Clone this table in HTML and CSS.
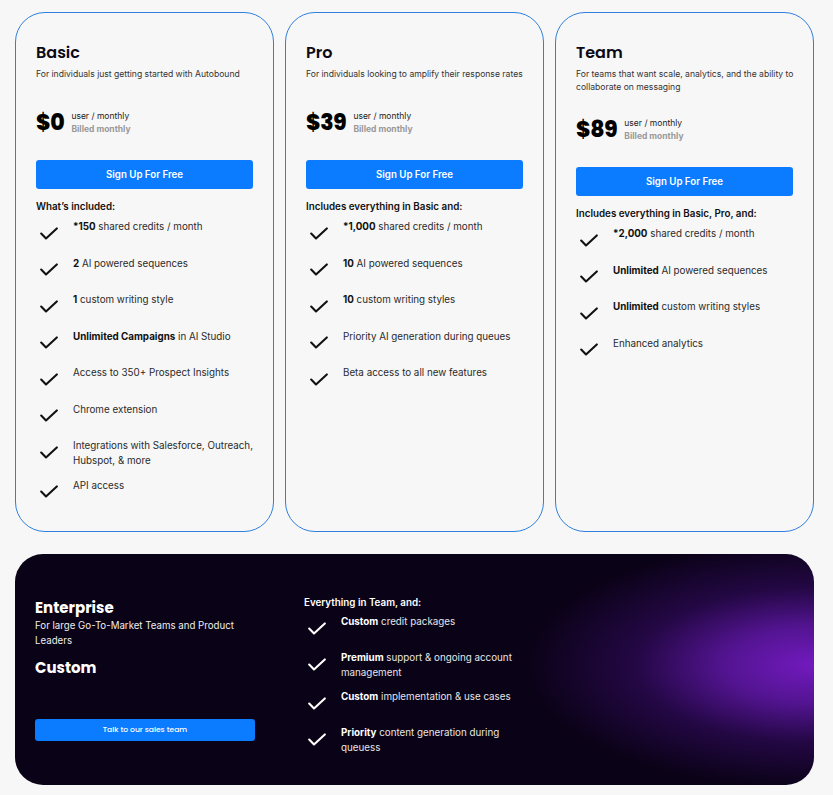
FILE: index.html
```html
<!DOCTYPE html>
<html>
<head>
<meta charset="utf-8">
<link rel="stylesheet" href="styles.css">
</head>
<body>
<svg width="0" height="0" class="defs">
  <symbol id="chk" viewBox="0 0 18 13"><path d="M1.2 6.6 L6 11.4 L16.8 1.4" fill="none" stroke="currentColor" stroke-width="2.1" stroke-linecap="round" stroke-linejoin="round"/></symbol>
</svg>
<main class="page">
  <section class="cards">
    <article class="card">
      <h2 class="title">Basic</h2>
      <p class="desc">For individuals just getting started with Autobound</p>
      <div class="price-row">
        <span class="price">$0</span>
        <span class="per"><span>user / monthly</span><span class="billed">Billed monthly</span></span>
      </div>
      <button class="btn">Sign Up For Free</button>
      <p class="list-head">What’s included:</p>
      <ul class="list">
        <li><span class="ic"><svg><use href="#chk"/></svg></span><span class="tx"><b>*150</b> shared credits / month</span></li>
        <li><span class="ic"><svg><use href="#chk"/></svg></span><span class="tx"><b>2</b> AI powered sequences</span></li>
        <li><span class="ic"><svg><use href="#chk"/></svg></span><span class="tx"><b>1</b> custom writing style</span></li>
        <li><span class="ic"><svg><use href="#chk"/></svg></span><span class="tx"><b>Unlimited Campaigns</b> in AI Studio</span></li>
        <li><span class="ic"><svg><use href="#chk"/></svg></span><span class="tx">Access to 350+ Prospect Insights</span></li>
        <li><span class="ic"><svg><use href="#chk"/></svg></span><span class="tx">Chrome extension</span></li>
        <li><span class="ic"><svg><use href="#chk"/></svg></span><span class="tx">Integrations with Salesforce, Outreach, Hubspot, &amp; more</span></li>
        <li><span class="ic"><svg><use href="#chk"/></svg></span><span class="tx">API access</span></li>
      </ul>
    </article>
    <article class="card">
      <h2 class="title">Pro</h2>
      <p class="desc">For individuals looking to amplify their response rates</p>
      <div class="price-row">
        <span class="price">$39</span>
        <span class="per"><span>user / monthly</span><span class="billed">Billed monthly</span></span>
      </div>
      <button class="btn">Sign Up For Free</button>
      <p class="list-head">Includes everything in Basic and:</p>
      <ul class="list">
        <li><span class="ic"><svg><use href="#chk"/></svg></span><span class="tx"><b>*1,000</b> shared credits / month</span></li>
        <li><span class="ic"><svg><use href="#chk"/></svg></span><span class="tx"><b>10</b> AI powered sequences</span></li>
        <li><span class="ic"><svg><use href="#chk"/></svg></span><span class="tx"><b>10</b> custom writing styles</span></li>
        <li><span class="ic"><svg><use href="#chk"/></svg></span><span class="tx">Priority AI generation during queues</span></li>
        <li><span class="ic"><svg><use href="#chk"/></svg></span><span class="tx">Beta access to all new features</span></li>
      </ul>
    </article>
    <article class="card">
      <h2 class="title">Team</h2>
      <p class="desc">For teams that want scale, analytics, and the ability to collaborate on messaging</p>
      <div class="price-row">
        <span class="price">$89</span>
        <span class="per"><span>user / monthly</span><span class="billed">Billed monthly</span></span>
      </div>
      <button class="btn">Sign Up For Free</button>
      <p class="list-head">Includes everything in Basic, Pro, and:</p>
      <ul class="list">
        <li><span class="ic"><svg><use href="#chk"/></svg></span><span class="tx"><b>*2,000</b> shared credits / month</span></li>
        <li><span class="ic"><svg><use href="#chk"/></svg></span><span class="tx"><b>Unlimited</b> AI powered sequences</span></li>
        <li><span class="ic"><svg><use href="#chk"/></svg></span><span class="tx"><b>Unlimited</b> custom writing styles</span></li>
        <li><span class="ic"><svg><use href="#chk"/></svg></span><span class="tx">Enhanced analytics</span></li>
      </ul>
    </article>
  </section>
  <section class="enterprise">
    <div class="ent-left">
      <h2 class="ent-title">Enterprise</h2>
      <p class="ent-desc">For large Go-To-Market Teams and Product Leaders</p>
      <p class="ent-price">Custom</p>
      <button class="ent-btn">Talk to our sales team</button>
    </div>
    <div class="ent-right">
      <p class="list-head">Everything in Team, and:</p>
      <ul class="list">
        <li><span class="ic"><svg><use href="#chk"/></svg></span><span class="tx"><b>Custom</b> credit packages</span></li>
        <li><span class="ic"><svg><use href="#chk"/></svg></span><span class="tx"><b>Premium</b> support &amp; ongoing account management</span></li>
        <li><span class="ic"><svg><use href="#chk"/></svg></span><span class="tx"><b>Custom</b> implementation &amp; use cases</span></li>
        <li><span class="ic"><svg><use href="#chk"/></svg></span><span class="tx"><b>Priority</b> content generation during queuess</span></li>
      </ul>
    </div>
  </section>
</main>
</body>
</html>
```
FILE: styles.css
```css
* { box-sizing: border-box; }
html, body { margin: 0; padding: 0; }
body {
  background: #f7f7f7;
  font-family: "Inter", "DejaVu Sans", sans-serif;
  color: #1a1a1a;
}
.defs { position: absolute; width: 0; height: 0; overflow: hidden; }
.page { padding: 12px 0 0 15px; width: 833px; }
.cards {
  display: grid;
  grid-template-columns: 259px 259px 259px;
  gap: 11px;
}
.card {
  height: 520px;
  border: 1px solid #2f7fdb;
  border-radius: 30px;
  padding: 30px 20px 0 20px;
  display: flex;
  flex-direction: column;
}
.title {
  margin: 0;
  font-family: "Poppins", "Inter", sans-serif;
  font-weight: 600;
  font-size: 16px;
  line-height: 20px;
  color: #0c0a14;
}
.desc {
  margin: 5px -8px 0 0;
  min-height: 19px;
  font-size: 8.6px;
  line-height: 13px;
  color: #333;
}
.price-row {
  margin-top: 23px;
  display: flex;
  align-items: center;
  gap: 7px;
  height: 26px;
}
.price {
  font-family: "Poppins", "Inter", sans-serif;
  font-weight: 800;
  font-size: 22px;
  line-height: 26px;
  color: #000;
  letter-spacing: -0.3px;
}
.per {
  display: flex;
  flex-direction: column;
  font-size: 8.5px;
  line-height: 13px;
  color: #222;
}
.billed { color: #999; font-weight: 700; }
.btn {
  margin-top: 24px;
  height: 29px;
  width: 100%;
  border: 0;
  border-radius: 3px;
  background: #0b7cff;
  color: #fff;
  font-family: "Inter", sans-serif;
  font-weight: 600;
  font-size: 9.7px;
  padding: 0;
}
.list-head {
  margin: 11px 0 0;
  font-size: 9.8px;
  line-height: 13px;
  font-weight: 600;
  color: #111;
}
.list {
  list-style: none;
  margin: 6px 0 0;
  padding: 0;
  display: flex;
  flex-direction: column;
  gap: 9.5px;
}
.list li { display: flex; align-items: flex-start; }
.ic {
  flex: 0 0 26px;
  height: 27px;
  display: flex;
  align-items: center;
  justify-content: center;
  color: #111;
}
.ic svg { width: 18px; height: 13px; margin-top: 1px; }
.tx {
  margin-left: 11px;
  font-size: 9.8px;
  line-height: 15px;
  color: #2a2a2a;
}
.tx b { font-weight: 700; color: #111; }

.enterprise {
  margin-top: 22px;
  width: 799px;
  height: 231px;
  border-radius: 28px;
  background:
    radial-gradient(ellipse 290px 125px at 100% 48%, rgba(114, 26, 190, 1) 0%, rgba(92, 22, 160, 0.9) 30%, rgba(56, 12, 106, 0.55) 62%, rgba(11, 2, 22, 0) 100%),
    #0a0216;
  padding: 44px 20px 0 20px;
  display: flex;
  gap: 49px;
  color: #fff;
}
.ent-left { width: 220px; display: flex; flex-direction: column; }
.ent-title {
  margin: 0;
  font-family: "Poppins", "Inter", sans-serif;
  font-weight: 700;
  font-size: 15px;
  line-height: 20px;
}
.ent-desc { margin: 0; font-size: 9.7px; line-height: 15px; color: #eee; }
.ent-price {
  margin: 9.5px 0 0;
  font-family: "Poppins", "Inter", sans-serif;
  font-weight: 700;
  font-size: 15px;
  line-height: 20px;
}
.ent-btn {
  margin-top: 41px;
  height: 22px;
  width: 220px;
  border: 0;
  border-radius: 3px;
  background: #0b7cff;
  color: #fff;
  font-family: "Poppins", "Inter", sans-serif;
  font-weight: 500;
  font-size: 7.6px;
  padding: 0;
}
.ent-right { width: 230px; margin-top: -2px; }
.ent-right .list-head { margin: 0; color: #fff; }
.ent-right .list { margin-top: 5px; gap: 9px; }
.ent-right .ic { color: #fff; }
.ent-right .tx { color: #e6e6e6; }
.ent-right .tx b { color: #fff; }
```
